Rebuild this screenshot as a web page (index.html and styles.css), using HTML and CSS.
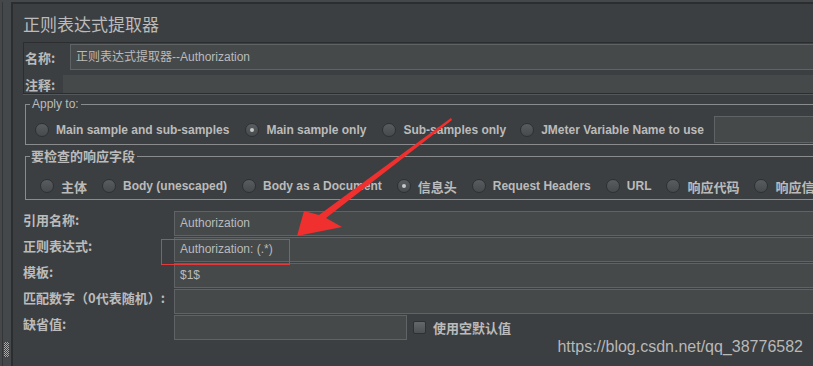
FILE: index.html
```html
<!DOCTYPE html>
<html lang="zh">
<head>
<meta charset="utf-8">
<title>正则表达式提取器</title>
<link rel="stylesheet" href="styles.css">
</head>
<body>
<div class="app">
  <div class="side"><div class="grip"></div></div>
  <div class="main">
    <div class="title">正则表达式提取器</div>
    <div class="namepanel">
      <div class="nrow">
        <span class="nlabel">名称:</span>
        <div class="field nfield">正则表达式提取器--Authorization</div>
      </div>
      <div class="nrow crow">
        <span class="clabel">注释:</span>
        <div class="cfield"></div>
      </div>
    </div>

    <fieldset class="group g1">
      <legend class="leg-en">Apply to:</legend>
      <div class="radios r1">
        <span class="opt"><i class="radio"></i><b>Main sample and sub-samples</b></span>
        <span class="opt"><i class="radio on"></i><b>Main sample only</b></span>
        <span class="opt"><i class="radio"></i><b>Sub-samples only</b></span>
        <span class="opt"><i class="radio"></i><b>JMeter Variable Name to use</b></span>
        <div class="field varfield"></div>
      </div>
    </fieldset>

    <fieldset class="group g2">
      <legend class="leg-cn">要检查的响应字段</legend>
      <div class="radios r2">
        <span class="opt"><i class="radio"></i><b class="cn">主体</b></span>
        <span class="opt"><i class="radio"></i><b>Body (unescaped)</b></span>
        <span class="opt"><i class="radio"></i><b>Body as a Document</b></span>
        <span class="opt"><i class="radio on"></i><b class="cn">信息头</b></span>
        <span class="opt"><i class="radio"></i><b>Request Headers</b></span>
        <span class="opt"><i class="radio"></i><b>URL</b></span>
        <span class="opt"><i class="radio"></i><b class="cn">响应代码</b></span>
        <span class="opt"><i class="radio"></i><b class="cn">响应信息</b></span>
      </div>
    </fieldset>

    <div class="form">
      <span class="flabel">引用名称:</span>
      <div class="field wide">Authorization</div>
      <span class="flabel">正则表达式:</span>
      <div class="field wide">Authorization: (.*)</div>
      <span class="flabel">模板:</span>
      <div class="field wide">$1$</div>
      <span class="flabel">匹配数字（0代表随机）:</span>
      <div class="field wide"></div>
      <span class="flabel">缺省值:</span>
      <div class="lastrow">
        <div class="field short"></div>
        <span class="check"><i class="box"></i><b class="cn">使用空默认值</b></span>
      </div>
    </div>
  </div>

  <div class="highlight"></div>
  <svg class="arrow" width="813" height="366" viewBox="0 0 813 366">
    <polygon fill="#f0302e" points="451,116 452,118 326,216 342,225 297,234 304,209 319,213"/>
  </svg>
  <div class="watermark">https://blog.csdn.net/qq_38776582</div>
</div>
</body>
</html>
```

FILE: styles.css
```css
* { box-sizing: border-box; }
html {
  margin: 0;
  padding: 0;
  overflow: hidden;
  background: #3c3f41;
}
body {
  margin: 0;
  padding: 0;
  height: 366px;
  overflow: hidden;
  background: #3c3f41;
  font-family: "Liberation Sans", Arial, "Noto Sans CJK SC", sans-serif;
  color: #bbbbbb;
}
.app {
  position: relative;
  display: flex;
  width: 100%;
  height: 366px;
  background: #3c3f41;
  border-top: 2px solid #45484a;
  overflow: hidden;
}
.side {
  flex: none;
  width: 13px;
  background: #45484a;
  border-left: 2px solid #45484a;
  border-right: 2px solid #2b2d2f;
  display: flex;
  flex-direction: column;
  justify-content: flex-end;
  padding-bottom: 9px;
  box-shadow: inset 1px 0 0 #333537;
}
.grip {
  width: 5px;
  height: 15px;
  margin-left: 2px;
  background: repeating-conic-gradient(#a9abad 0 25%, #3a3c3e 0 50%) 0 0 / 2px 2px;
}
.main {
  flex: 1;
  min-width: 0;
  overflow: hidden;
  background: #3c3f41;
  border-top: 2px solid #2b2d2f;
  padding-left: 10px;
}
.title {
  height: 38px;
  padding-top: 10px;
  line-height: 20px;
  font-size: 17px;
  font-family: "Noto Sans CJK SC", sans-serif;
  color: #bbbbbb;
}
.field {
  height: 25px;
  background: #45494a;
  border: 1px solid #5f6365;
  font-size: 12px;
  line-height: 23px;
  padding-left: 5px;
  color: #bbbbbb;
  white-space: nowrap;
}
.wide, .nfield, .varfield { border-right: none; }
.namepanel {
  border: 1px solid #2b2d2f;
  border-right: none;
  box-shadow: 0 1px 0 #55585a;
  padding-left: 1px;
}
.nrow { display: flex; align-items: center; }
.nrow:first-child { margin-top: 1px; }
.nlabel, .clabel, .flabel, .cn {
  font-family: "Noto Sans CJK SC", sans-serif;
  font-weight: bold;
  font-size: 13px;
}
.nlabel { width: 45px; }
.nfield { flex: 1; height: 26px; line-height: 24px; }
.crow { margin-top: 5px; height: 18px; }
.clabel { width: 38px; }
.cfield { flex: 1; height: 18px; background: #45494a; }

.group {
  margin: 3px 0 0 2px;
  border: 1px solid #8a8b8c;
  border-right: none;
  min-width: 0;
}
.g1 { padding: 5px 0 1px 9px; }
.g2 { padding: 10px 0 1px 14px; }
.leg-en {
  font-size: 12px;
  line-height: 14px;
  padding: 0 2px;
  margin-left: -5px;
}
.g2 .leg-cn {
  font-family: "Noto Sans CJK SC", sans-serif;
  font-weight: bold;
  font-size: 13px;
  line-height: 16px;
  padding: 0 2px 0 1px;
  margin-left: -10px;
}
.radios {
  display: flex;
  align-items: center;
  white-space: nowrap;
}
.r1 { height: 27px; }
.r2 { height: 24px; }
.opt {
  flex: none;
  display: flex;
  align-items: center;
  gap: 7px;
  font-size: 12px;
  font-weight: bold;
  margin-right: 16px;
}
.opt b { font-weight: bold; }
.r1 .opt:nth-child(3) { margin-right: 14px; }
.r2 .opt { margin-right: 15px; }
.radio {
  display: block;
  width: 14px;
  height: 14px;
  border-radius: 50%;
  border: 1px solid #2e3133;
  background: linear-gradient(#595d60, #474a4d);
  position: relative;
}
.radio.on::after {
  content: "";
  position: absolute;
  left: 4px;
  top: 4px;
  width: 4px;
  height: 4px;
  border-radius: 50%;
  background: #c8c8c8;
}
.varfield { margin-left: -6px; flex: 1; height: 27px; }

.form {
  margin-top: 11px;
  display: grid;
  grid-template-columns: 151px 1fr;
  grid-auto-rows: 25px;
  row-gap: 1px;
}
.flabel { line-height: 18px; }
.lastrow { display: flex; align-items: center; }
.short { width: 233px; }
.check {
  display: flex;
  align-items: center;
  gap: 7px;
  margin-left: 6px;
}
.box {
  display: block;
  width: 13px;
  height: 13px;
  border: 1px solid #2e3133;
  background: linear-gradient(#64686b, #4d5053);
  border-radius: 2px;
}

.highlight {
  position: absolute;
  left: 161px;
  top: 237px;
  width: 129px;
  height: 26px;
  border: 1px solid #e23a3a;
}
.arrow { position: absolute; left: 0; top: 0; }
.watermark {
  position: absolute;
  right: 10px;
  top: 336px;
  font-family: "Liberation Sans", Arial, sans-serif;
  font-size: 16px;
  color: rgba(220, 220, 220, 0.78);
}
```
